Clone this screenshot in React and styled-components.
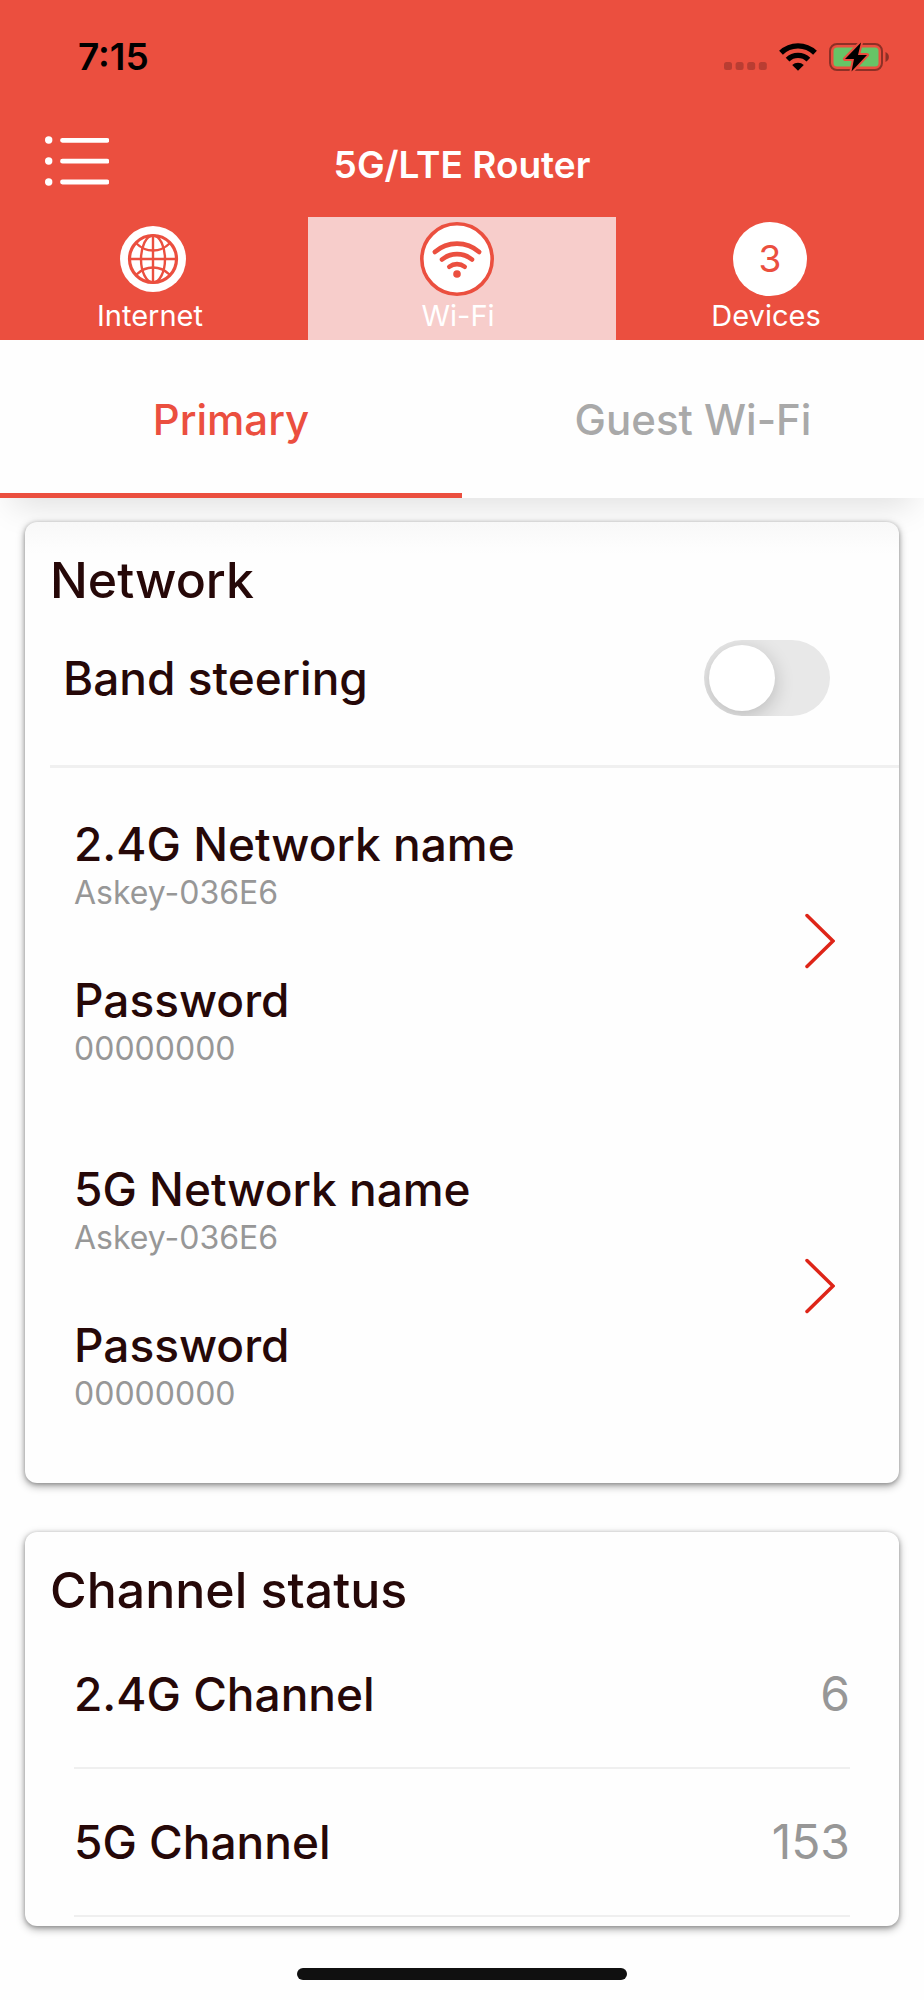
import React, { useState } from 'react';
import styled, { createGlobalStyle, css } from 'styled-components';

const networks = [
  { id: '2.4g', title: '2.4G Network name', name: 'Askey-036E6', password: '00000000' },
  { id: '5g', title: '5G Network name', name: 'Askey-036E6', password: '00000000' },
];

const channels = [
  { id: '2.4g', title: '2.4G Channel', value: 6 },
  { id: '5g', title: '5G Channel', value: 153 },
];

const SignalIcon = () => (
  <svg width="43" height="28" viewBox="0 0 43 28" fill="#b93d32" aria-hidden="true">
    <rect x="0" y="19" width="8" height="8" rx="2.5" />
    <rect x="11.6" y="19" width="8" height="8" rx="2.5" />
    <rect x="23.2" y="19" width="8" height="8" rx="2.5" />
    <rect x="34.8" y="19" width="8" height="8" rx="2.5" />
  </svg>
);

const StatusWifiIcon = () => (
  <svg width="38" height="28" viewBox="0 0 38 28" aria-hidden="true">
    <g fill="none" stroke="#000" strokeWidth="5.4">
      <path d="M2 9.8a24.4 24.4 0 0 1 34 0" />
      <path d="M8.600 16.600a15 15 0 0 1 20.800 0" />
    </g>
    <path d="M19 27.800l-5.800-5.700a8.300 8.300 0 0 1 11.600 0z" />
  </svg>
);

const BatteryIcon = () => (
  <svg width="60" height="30" viewBox="0 0 60 30" aria-hidden="true">
    <rect x="1" y="2" width="52" height="26" rx="7" fill="none" stroke="#8d3026" strokeWidth="2" />
    <path d="M56.5 10q3.4 1.6 3.4 5t-3.4 5z" fill="#8d3026" />
    <rect x="4.5" y="5.5" width="45" height="19" rx="3.5" fill="#67c466" />
    <path
      d="M32 0.5L16 17h9L22.5 29.5 38 13h-9z"
      fill="#000"
      stroke="#eb4f3f"
      strokeWidth="4"
      strokeLinejoin="round"
      paintOrder="stroke"
    />
  </svg>
);

const MenuIcon = () => (
  <svg width="64" height="56" viewBox="0 0 64 56" aria-hidden="true">
    <g fill="#fff">
      <circle cx="3.7" cy="4" r="3.7" />
      <circle cx="3.7" cy="25" r="3.7" />
      <circle cx="3.7" cy="46" r="3.7" />
    </g>
    <path d="M17.5 4.3H62M17.5 25.2H62M17.5 46H62" stroke="#fff" strokeWidth="4.8" strokeLinecap="round" />
  </svg>
);

const GlobeIcon = () => (
  <svg width="74" height="74" viewBox="0 0 74 74" aria-hidden="true">
    <circle cx="36" cy="37" r="33" fill="#fff" />
    <g fill="none" stroke="#eb4f3f" strokeWidth="2.4">
      <circle cx="36" cy="37" r="23.5" strokeWidth="3.2" />
      <path d="M36 13.5v47M12.500 37h47" />
      <ellipse cx="36" cy="37" rx="12" ry="23.5" />
      <path d="M19.5 21.5q7 7 16.5 7t16.5-7M19.5 52.5q7-7 16.5-7t16.5 7" />
    </g>
  </svg>
);

const WifiIcon = () => (
  <svg width="84" height="74" viewBox="0 0 84 74" aria-hidden="true">
    <circle cx="37" cy="37" r="35.2" fill="#fff" stroke="#eb4f3f" strokeWidth="3.6" />
    <g fill="none" stroke="#eb4f3f" strokeWidth="4.6" strokeLinecap="round">
      <path d="M14.8 30a33.5 33.5 0 0 1 44.4 0" />
      <path d="M22 37.5a23.5 23.5 0 0 1 30 0" />
      <path d="M29.3 44.8a12.5 12.5 0 0 1 15.4 0" />
    </g>
    <circle cx="37" cy="52" r="3.8" fill="#eb4f3f" />
  </svg>
);

const ChevronIcon = () => (
  <svg width="30" height="56" viewBox="0 0 30 56" aria-hidden="true">
    <path d="M2 2.5L28 28 2 53.5" fill="none" stroke="#de2518" strokeWidth="3.5" strokeLinecap="round" />
  </svg>
);

const App = () => {
  const [section, setSection] = useState('wifi');
  const [tab, setTab] = useState('primary');
  const [steering, setSteering] = useState(false);

  const handleChangeSteering = (e) => {
    setSteering(e.target.checked);
  };

  return (
    <Page>
      <GlobalStyle />
      <Header>
        <StatusBar>
          <span>7:15</span>
          <StatusIcons>
            <SignalIcon />
            <StatusWifiIcon />
            <BatteryIcon />
          </StatusIcons>
        </StatusBar>
        <TitleBar>
          <MenuButton aria-label="Menu">
            <MenuIcon />
          </MenuButton>
          <ProductName>5G/LTE Router</ProductName>
        </TitleBar>
        <Nav>
          <NavButton $active={section === 'internet'} onClick={() => setSection('internet')}>
            <GlobeIcon />
            <NavLabel>Internet</NavLabel>
          </NavButton>
          <NavButton $active={section === 'wifi'} onClick={() => setSection('wifi')}>
            <WifiIcon />
            <NavLabel>Wi-Fi</NavLabel>
          </NavButton>
          <NavButton $active={section === 'devices'} onClick={() => setSection('devices')}>
            <DeviceCount>3</DeviceCount>
            <NavLabel>Devices</NavLabel>
          </NavButton>
        </Nav>
      </Header>
      <Tabs>
        <TabButton $active={tab === 'primary'} onClick={() => setTab('primary')}>
          Primary
        </TabButton>
        <TabButton $active={tab === 'guest'} onClick={() => setTab('guest')}>
          Guest Wi-Fi
        </TabButton>
      </Tabs>
      <Main>
        <Card $shaded>
          <CardTitle>Network</CardTitle>
          <SwitchRow>
            <label htmlFor="steering">Band steering</label>
            <Switch type="checkbox" id="steering" checked={steering} onChange={handleChangeSteering} />
          </SwitchRow>
          <Networks>
            {networks.map((network) => (
              <NetworkButton key={network.id}>
                <Fields>
                  <Field>
                    {network.title}
                    <FieldValue>{network.name}</FieldValue>
                  </Field>
                  <Field>
                    Password
                    <FieldValue>{network.password}</FieldValue>
                  </Field>
                </Fields>
                <ChevronIcon />
              </NetworkButton>
            ))}
          </Networks>
        </Card>
        <Card>
          <CardTitle>Channel status</CardTitle>
          <Channels>
            {channels.map((channel) => (
              <ChannelRow key={channel.id}>
                <dt>{channel.title}</dt>
                <ChannelValue>{channel.value}</ChannelValue>
              </ChannelRow>
            ))}
          </Channels>
        </Card>
      </Main>
      <HomeBar />
    </Page>
  );
};

export default App;

const GlobalStyle = createGlobalStyle`
  * {
    box-sizing: border-box;
    margin: 0;
    padding: 0;
  }
  body {
    background-color: #fefefe;
    color: #260808;
    font-family: Inter, 'Liberation Sans', sans-serif;
  }
  button {
    background: none;
    border: none;
    color: inherit;
    cursor: pointer;
    font: inherit;
  }
  svg {
    display: block;
    flex-shrink: 0;
  }
`;

const Page = styled.div`
  display: flex;
  flex-direction: column;
  min-height: 100vh;
`;

const Header = styled.header`
  background-color: #eb4f3f;
  color: white;
`;

const StatusBar = styled.div`
  display: flex;
  align-items: center;
  justify-content: space-between;
  height: 113px;
  padding: 0 35px 0 78px;
  color: black;
  font-size: 37px;
  font-weight: 600;
`;

const StatusIcons = styled.div`
  display: flex;
  align-items: center;
  gap: 12px;
`;

const TitleBar = styled.div`
  display: grid;
  grid-template-columns: 64px 1fr 64px;
  align-items: center;
  height: 104px;
  padding: 0 45px 2px;
`;

const MenuButton = styled.button`
  width: 64px;
`;

const ProductName = styled.h1`
  font-size: 37px;
  font-weight: 600;
  text-align: center;
`;

const Nav = styled.nav`
  display: grid;
  grid-template-columns: repeat(3, 1fr);
`;

const NavButton = styled.button`
  display: flex;
  flex-direction: column;
  align-items: center;
  padding: 5px 0 4px;
  background-color: ${({ $active }) => ($active ? '#f7cdcb' : 'transparent')};
`;

const NavLabel = styled.span`
  padding-right: 8px;
  font-size: 29px;
  line-height: 40px;
`;

const DeviceCount = styled.span`
  width: 74px;
  height: 74px;
  border-radius: 50%;
  background-color: white;
  color: #eb4f3f;
  font-size: 37px;
  line-height: 74px;
`;

const Tabs = styled.div`
  display: grid;
  grid-template-columns: repeat(2, 1fr);
  background-color: #fefefe;
  box-shadow: 0 20px 32px -12px rgba(0, 0, 0, 0.12);
`;

const TabButton = styled.button`
  height: 158px;
  border-top: 5px solid transparent;
  border-bottom: 5px solid ${({ $active }) => ($active ? '#eb4f3f' : 'transparent')};
  color: ${({ $active }) => ($active ? '#eb4f3f' : '#a9a9a9')};
  font-size: 42px;
  font-weight: 500;
`;

const Main = styled.main`
  display: flex;
  flex-direction: column;
  gap: 49px;
  padding: 24px 25px 42px;
`;

const cardShade = css`
  background-image: linear-gradient(#f8f8f8, #fefefe 32px);
`;

const Card = styled.section`
  padding-top: 27px;
  border-radius: 12px;
  background-color: #fefefe;
  box-shadow: 0 3px 8px rgba(0, 0, 0, 0.36), 0 1px 4px rgba(0, 0, 0, 0.24);
  ${({ $shaded }) => $shaded && cardShade}
`;

const CardTitle = styled.h2`
  padding: 0 25px;
  font-size: 50px;
  font-weight: 500;
  line-height: 62px;
`;

const SwitchRow = styled.div`
  display: flex;
  align-items: center;
  justify-content: space-between;
  margin-left: 25px;
  padding: 29px 69px 49px 13px;
  border-bottom: 3px solid #f0f0f0;
  font-size: 46px;
  font-weight: 500;
  line-height: 76px;
`;

const Switch = styled.input`
  appearance: none;
  width: 126px;
  height: 76px;
  padding: 5px;
  border-radius: 38px;
  background-color: ${({ checked }) => (checked ? '#eb4f3f' : '#e8e8e8')};
  cursor: pointer;
  overflow: hidden;
  &::before {
    content: '';
    display: block;
    width: 66px;
    height: 66px;
    margin-left: ${({ checked }) => (checked ? '50px' : '0')};
    border-radius: 50%;
    background-color: white;
    box-shadow: 0 5px 20px rgba(0, 0, 0, 0.2);
  }
`;

const Networks = styled.div`
  padding-bottom: 25px;
`;

const NetworkButton = styled.button`
  display: flex;
  align-items: center;
  justify-content: space-between;
  width: 100%;
  padding: 43px 64px 43px 49px;
  text-align: left;
`;

const Fields = styled.span`
  display: flex;
  flex-direction: column;
  gap: 58px;
  padding-top: 5px;
`;

const Field = styled.span`
  font-size: 46px;
  font-weight: 500;
  line-height: 56px;
`;

const FieldValue = styled.span`
  display: block;
  color: #979797;
  font-size: 32px;
  font-weight: 400;
  line-height: 42px;
`;

const Channels = styled.dl`
  padding: 0 49px 9px;
`;

const ChannelRow = styled.div`
  display: flex;
  justify-content: space-between;
  border-bottom: 2px solid #efefef;
  font-size: 46px;
  font-weight: 500;
  line-height: 146px;
`;

const ChannelValue = styled.dd`
  color: #979797;
  font-size: 48px;
  font-weight: 400;
`;

const HomeBar = styled.div`
  align-self: center;
  width: 330px;
  height: 12px;
  margin-bottom: 20px;
  border-radius: 6px;
  background-color: #101010;
`;
